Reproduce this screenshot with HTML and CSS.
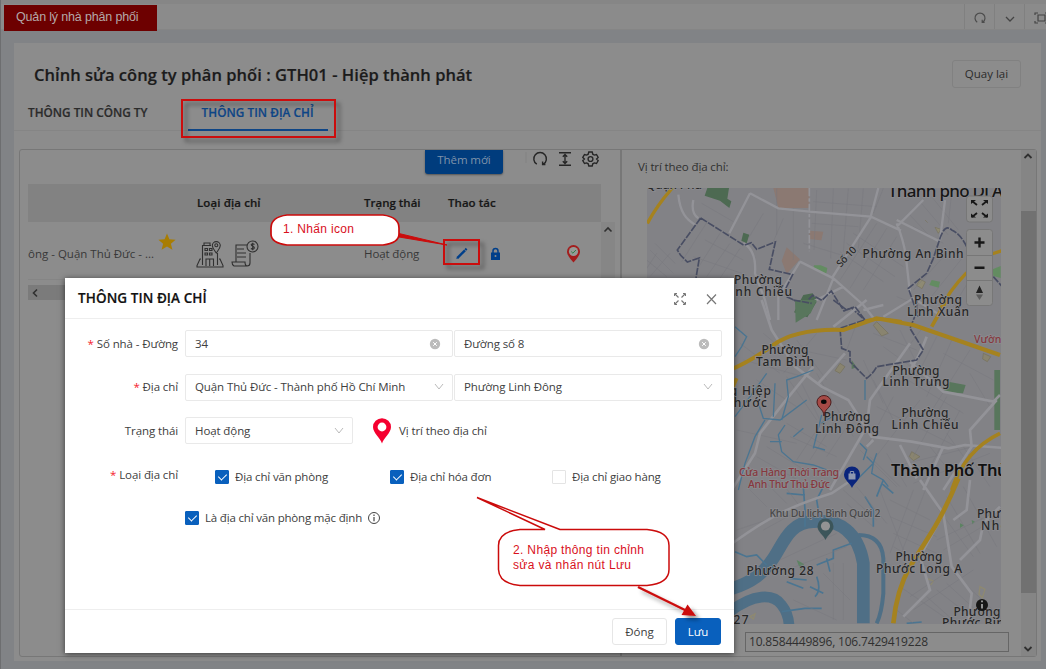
FILE: index.html
```html
<!DOCTYPE html>
<html lang="vi">
<head>
<meta charset="utf-8">
<title>Quản lý nhà phân phối</title>
<link rel="stylesheet" href="styles.css">
</head>
<body>
<div class="topbar">
  <div class="page-tab">Quản lý nhà phân phối</div>
  <div class="top-tools">
    <span class="tool"><svg width="14" height="14" viewBox="0 0 14 14"><path d="M4.2 11.2A5 5 0 1 1 9.8 11.2M9.2 8.8v2.6h2.4" fill="none" stroke="#4c4c4c" stroke-width="1.2"/></svg></span>
    <span class="tool"><svg width="12" height="12" viewBox="0 0 12 12"><path d="M2 5l4 4 4-4" fill="none" stroke="#444" stroke-width="1.3"/></svg></span>
    <span class="tool"><svg width="14" height="12" viewBox="0 0 14 12"><path d="M4 3h7v6H4zM1 3V1h3M1 9v2h3M11 1h3v2M11 11h3V9" fill="none" stroke="#444" stroke-width="1.2"/></svg></span>
  </div>
</div>
<main class="panel">
  <header class="panel-head">
    <h1 class="title">Chỉnh sửa công ty phân phối : GTH01 - Hiệp thành phát</h1>
    <button class="back">Quay lại</button>
  </header>
  <nav class="tabs">
    <span class="tab">THÔNG TIN CÔNG TY</span>
    <span class="tab active">THÔNG TIN ĐỊA CHỈ</span>
  </nav>
  <section class="split">
    <div class="list-pane">
      <div class="toolbar">
        <button class="add">Thêm mới</button>
        <svg class="tools" width="74" height="18" viewBox="0 0 74 18">
          <path d="M1 2v11" stroke="#828282"/>
          <g fill="none" stroke="#262626" stroke-width="1.4">
            <path d="M11.8 14.2A6.3 6.3 0 1 1 18.4 14.2M17.6 11.6v2.9h2.8"/>
            <path d="M34 2.7h12M34 15.3h12M40 5v8M37.8 6.8L40 4.6l2.2 2.2M37.8 11.2L40 13.4l2.2-2.2"/>
            <g transform="translate(65.500 9)"><path d="M-1.700-7h3.400l.6 2.200 1.500.9 2.200-.6 1.700 2.900L6.100 0l1.600 1.600L6 4.500l-2.200-.6-1.500.9L1.700 7h-3.400l-.6-2.200-1.500-.9-2.200.6-1.700-2.900L-6.100 0l-1.600-1.600L-6-4.500l2.200.6 1.500-.9z"/><circle r="2.400"/></g>
          </g>
        </svg>
      </div>
      <div class="thead"><span class="c-type">Loại địa chỉ</span><span class="c-status">Trạng thái</span><span class="c-act">Thao tác</span></div>
      <div class="trow">
        <span class="addr">ông - Quận Thủ Đức - ...</span>
        <svg class="star" width="18" height="18" viewBox="0 0 18 18"><path d="M9 .6l2.4 5.7 6.2.5-4.7 4 1.5 6L9 13.5l-5.400 3.300 1.500-6-4.700-4 6.200-.5z" fill="#a87d03"/></svg>
        <svg class="kinds" width="64" height="30" viewBox="0 0 64 30" fill="none" stroke="#303030" stroke-width="1.1">
          <path d="M6.500 26V6.500H15M21.500 14v12M5 20H4l-3 6.500v1.500h26v-1.500L24 20h-1M10 27v-7h7.500v7M13.700 20v7"/>
          <path d="M9 9.500h2.500v2H9zM13.500 9.500H16v2h-2.500zM9 14h2.500v2H9zM13.500 14H16v2h-2.500zM8 6V4h6v2.500"/>
          <path d="M20.300 14c-2-3-4-5-4-7.400a4 4 0 0 1 8 0c0 2.400-2 4.400-4 7.400z"/><circle cx="20.300" cy="6.300" r="1.500"/>
          <path d="M40 23V6h11M54 14v10q0 3-3 3H38q-2-1-2-4h13q0 4 2.500 4M43 10h5M43 14h7M43 18h7"/>
          <path d="M41.500 10h1M41.500 14h1M41.500 18h1" stroke-width="2"/>
          <circle cx="56.500" cy="7.500" r="5.500"/><path d="M58.500 5.500q-2-1.500-3.300 0 0 1.200 1.500 1.800 2 .8 1.500 2-1.300 1.400-3.300.2M56.700 3.800v7.400"/>
        </svg>
        <span class="status">Hoạt động</span>
        <svg class="acts" width="140" height="22" viewBox="0 0 140 22">
          <path d="M13.500 14.800L21 7.300" stroke="#003f8a" stroke-width="2.400"/><path d="M12.300 16l.7-2.500 1.800 1.800z" fill="#003f8a"/><path d="M21.300 7l1.300-1.300" stroke="#003f8a" stroke-width="2.400"/>
          <path d="M47 9.500h9v7.500h-9z" fill="#003f8a"/><path d="M49 10V8a2.500 2.500 0 0 1 5 0v2" fill="none" stroke="#003f8a" stroke-width="1.500"/><circle cx="51.500" cy="13" r="1" fill="#8c8c8c"/>
          <path d="M129.500 19.500c-1.500-2-6.500-6.500-6.500-11a6.500 6.500 0 0 1 13 0c0 4.500-5 9-6.500 11z" fill="#a31d1d"/><circle cx="129.500" cy="8.500" r="4.600" fill="#969a96"/><path d="M127.200 8.500l1.700 1.700 3-3.200" fill="none" stroke="#2f8148"/>
        </svg>
      </div>
      <div class="vscroll"><svg width="14" height="12" viewBox="0 0 14 12"><path d="M3.500 9.500L7 6l3.500 3.500" fill="none" stroke="#303030" stroke-width="1.600"/></svg></div>
      <div class="hscroll"><svg width="14" height="14" viewBox="0 0 14 14"><path d="M9 4.500L5.500 8 9 11.500" fill="none" stroke="#303030" stroke-width="1.600"/></svg></div>
    </div>
    <div class="map-pane">
      <div class="map-col">
        <div class="map-label">Vị trí theo địa chỉ:</div>
        <svg class="map" width="354" height="436" viewBox="647 188 354 436">
          <rect x="647" y="188" width="354" height="436" fill="#828286"/>
          <!-- northern districts -->
          <g transform="translate(630 140) scale(.33333)" fill="none">
            <path d="M430 144h108v60H445zM540 272l40 3-6 26-38-4zM470 322l40 36-40 44-15-40z" fill="#8b7972"/>
            <path d="M232 144h65l-5 32 12 8-6 20-28-22-46-15zM340 278l18 6-8 26-16-8zM520 465l28-5 14 22-30 50-40-15z" fill="#4d6a52"/>
            <path d="M552 376l20 0 20 8-4 22-20-12-18-8zM905 420l25 5-4 18-28-8zM1088 388l24-10v36l-22-6z" fill="#638c61"/>
            <path d="M870 418l16 8-10 20-16-10zM885 240l8 8M915 262l18 6-8 12z" fill="#8e8a73" stroke="#77735e" stroke-width="2"/>
            <g stroke="#77777e" stroke-width="1.500">
              <path d="M215 190l95 55M235 240l-80 125M270 280l-70 110M300 310l-70 100M330 325l-60 90M190 350l160 55M225 300l115 60M400 220l-45 75M460 235l-30 70M440 145v140M490 205v155M560 150l-8 180M610 145l-8 210M655 145l-15 190M700 145l-15 180M760 145l-30 75M550 185l190 15M545 250l140 10M520 310l130 40M670 280l150 100M650 310l145 100M630 335l130 90M740 250l-110 170M770 265l-110 180M800 290l-100 160M835 220l75 80M850 260l90 50M870 185l85 100M905 170l80 100M965 160l-10 90M60 330l70 70M50 360l60 50M75 310l60 60M120 340l-60 70M80 340l-40 60M850 450l100-110M880 500l120-150M800 470l130 50M970 500l90-150"/>
            </g>
            <g stroke="#939398" stroke-width="7">
              <path d="M145 164c5 55 25 75 50 90M190 180q-8 40 15 55M360 160l85 45 93 10 185 15 90 42M360 160l-62 120M745 144l-24 90-115 180M340 310q40 20 35 90l30 80 15 60M510 365l100 50 90 80 35 45M510 365l-65 105v70M800 250q25 60 30 120l10 90M880 180l-80 80M800 240l130 65M945 180l-15 120M610 415l-50 125M640 440l-120 60M760 530l90-55 80 50M700 510l60-15"/>
              <path d="M538 144v190" stroke-width="5" stroke-dasharray="25 6 10 6"/>
            </g>
            <path d="M212 234L142 330l10 16 20 20 36-12-10 60M212 234l130 82 22-8 16 20 56-22-18 82 70 16-20 40M470 470l50 24 28-28 28 15 28-28 38 60 22-10 38 35M1010 320q-20-40-45-50-20-20-35 25l-20 60-20 45-55 45 30 85M1090 410l25 28" stroke="#494e63" stroke-width="5" stroke-dasharray="22 4"/>
            <path d="M52 250q30-55 75-106M930 510q25-55 80-112M1085 342l30-10M700 545q40-15 115 0" stroke="#a5821f" stroke-width="10"/>
          </g>
          <!-- central districts -->
          <g transform="translate(730 300) scale(.33333)" fill="none">
            <path d="M195 0h65l-18 40-45 28zM655 245l52 10-8 25-60-5zM365 180l15 22-15 5zM793 210h17v180h-17z" fill="#58765c"/>
            <path d="M440 65l35 35-20 8-25-32zM545 455l25 15-20 12-12-12zM760 160l22 10-10 15-14-8zM330 190l15 10-15 20-15-8z" fill="#89846f" stroke="#746f5b" stroke-width="2"/>
            <g stroke="#77777e" stroke-width="1.500">
              <path d="M30 130l120 90M40 180l180 50M80 240l120 80M20 390l180 40M100 100l120 100M200 120l90 120M260 100l-100 120M170 230l90 130M210 240l80 160M260 220l110 190M300 330l-100 150M330 340l-90 140M370 350l-80 120M400 180l60 130M430 240l70 140M460 140l110 80M510 90l60 120M580 80l-60 80M620 110l-60 120M670 110l-80 180M720 150l-120 190M500 220l200 120M440 320l240 120M490 290l-80 150M570 300l-140 180M650 290l-100 180M690 330l-100 190M720 220l60 100M640 160l150 80M390 450l110 110M420 470l90 90M470 460l60 100M600 440l80 100M650 400l80 110M700 440l80 120M490 500l240-60M550 550l230-90M180 410l140 60M170 370l120 70M110 440l130 80M80 470l140 80M210 150l140 30M380 70l-30 80M430 100l130 50"/>
            </g>
            <g stroke="#939398" stroke-width="8">
              <path d="M95 0l30 90 70 110 80 60 80 40 70 110 120 15 110 20 50-10 130 10M250 200l-90 110-70 90-15 60-70 110M345 160l-80 90M540 130l-120 170-10 80-110 190M540 185l100 90 150 30 20-20M800 300l-80 90 5 50-85 130M410 0l-100 80M590 110q-30 80-60 110M640 440l-60 130M510 435l50 100M430 420l-20 20"/>
            </g>
            <g stroke="#4b7591" stroke-width="4"><path d="M15 80l35 30-15 30-20 30M250 210l-50 20-30 10 5 50-20 70M110 220l-50 70-45 60M135 250l-5 100M230 300l-80 60-50-5-20-60M105 360l-30 50-30 80-20 80M165 375l-20 30 10 50 35 30 60 10 40 15M220 385l-30 25M120 425h35M275 345l-25 100M275 370l30-20M250 440l35 10M405 240v60M390 430l20 20-10 30M410 470l20 20-5 30 35 20 15 20M440 460l-10 30-50 50"/></g>
            <path d="M310 0l40 30 25-10 30 40-75 25 5 60 25 10v30l50 50q20-15 30-35l60-10 60-10 20-30-40-65 20-50V0M190 0l55 10" stroke="#494e63" stroke-width="5" stroke-dasharray="22 4"/>
            <path d="M0 210q60-25 130-75t210-45l100-35 110 20 260 90" stroke="#a5821f" stroke-width="12"/><path d="M605 80l45-80M665 570q40-120 145-170M0 280l20-45" stroke="#a5821f" stroke-width="11"/>
          </g>
          <!-- river and southern districts -->
          <g transform="translate(730 480) scale(.33333)" fill="none">
            <path d="M0 328C70 305 100 280 130 235S180 125 250 125C330 115 385 160 400 250V430" stroke="#4f6f86" stroke-width="38"/>
            <path d="M0 395C70 340 130 340 155 375q20 25 22 60" stroke="#4f6f86" stroke-width="32"/>
            <path d="M385 165q70 0 75 70V340q-5 60-20 90" stroke="#4f6f86" stroke-width="12"/>
            <g stroke="#4b7591" stroke-width="5"><path d="M15 215l35 15 30-5 30 30M225 140V90l-5-70M170 40l55 5M270 120l-10-60 20-40M365 190l-55 20v25l-50 20M290 235l10 40M240 320l40 20M230 300l-50-5M170 305l50 20M260 290q15 40-5 60M155 395l70-10h50M430 140V90l-25-40M460 0l-20 50M490 40l-35-30M530 430l45-4"/></g>
            <path d="M200 240l22 12-10 20zM20 345l20-10M690 130l12 6-12 8zM725 120l10 5-8 8z" fill="#5c8362"/>
            <path d="M750 320l15 8-8 25-10-10zM590 295l20 8-8 12M60 410l15-8-5 15z" stroke="#8e8971" stroke-width="4"/>
            <g stroke="#77777e" stroke-width="1.500"><path d="M150 240l170-80M170 270l180-70M100 150l110-60M20 150l120-40M50 20l60 60M110 10l60 60M150 0l60 80M340 30l100 90M350 70l80 70M380 20l90 110M450 30l70 180M480 60l120 60M480 110l140 60M490 160l130 60M490 200l120 70M550 30l-70 190M590 20l-80 210M620 80l110 150M650 50l100 170M700 20l100 180M620 180l170-80M640 210l150-90M670 280l130 120M650 310l120 110M620 330l130 100M590 350l90 80M550 390l180-120M540 350l150-100M510 320l160 110M500 390l50 40M310 250v170M340 250v170M280 280l80 80M190 360l130 60"/></g>
            <path d="M0 195Q90 130 150 100t155-60l60-40M570 0l70 100 25 160 60 80-10 90M810 80l-50 50-10 50-60 60M720 0l-10 90-40 30M640 100l-70 130 30 100-80 80" stroke="#939398" stroke-width="8"/>
            <path d="M685-5Q650 80 615 140L540 260Q500 330 490 430" stroke="#a5821f" stroke-width="14"/>
          </g>
          <g class="map-text" text-anchor="middle">
            <text x="674" y="189" textLength="56">Quận Phú</text>
            <text class="city" x="888" y="197" text-anchor="start" textLength="125">Thành phố Dĩ An</text>
            <text x="913" y="257.500" textLength="101">Phường An Bình</text>
            <text class="road" transform="translate(849 259) rotate(-47)" textLength="24">Số 10</text>
            <text x="758" y="284" textLength="48">Phường</text><text x="758" y="296" textLength="68">Linh Chiểu</text>
            <text x="938" y="304" textLength="48">Phường</text><text x="938" y="316" textLength="62">Linh Xuân</text>
            <text x="785" y="354" textLength="47">Phường</text><text x="785" y="366" textLength="58">Tam Bình</text>
            <text x="916" y="374.500" textLength="47">Phường</text><text x="916" y="386" textLength="67">Linh Trung</text>
            <text x="742" y="395" textLength="58">ờng Hiệp</text><text x="746" y="407" textLength="42">Phước</text>
            <text x="847" y="421" textLength="47">Phường</text><text x="847" y="433" textLength="64">Linh Đông</text>
            <text x="925" y="417" textLength="47">Phường</text><text x="925" y="429" textLength="67">Linh Chiểu</text>
            <text class="big" x="891" y="476" text-anchor="start" textLength="152">Thành Phố Thủ Đức</text>
            <text class="red" x="974" y="343" text-anchor="start" textLength="48">Vườn thú</text>
            <text class="red" x="789" y="475.500" textLength="100">Cửa Hàng Thời Trang</text><text class="red" x="789" y="487.500" textLength="82">Anh Thư Thủ Đức</text>
            <text class="poi" x="825" y="517" textLength="111">Khu Du lịch Bình Quới 2</text>
            <text x="977" y="518" text-anchor="start" textLength="47">Phường</text><text x="981" y="530" text-anchor="start" textLength="36">Nhơn</text>
            <text x="919" y="561" textLength="47">Phường</text><text x="919" y="573" textLength="86">Phước Long A</text>
            <text x="780" y="575" textLength="67">Phường 28</text><text x="741" y="623.500" textLength="15">27</text>
            <text x="977" y="616" textLength="47">Phường</text><text x="942" y="627" text-anchor="start" textLength="70">Phước Bình</text>
          </g>
          <path d="M824 416c0-7-7-8-7-14a7 6.500 0 0 1 14 0c0 6-7 7-7 14z" fill="#a64a46" stroke="#4a1c1c"/><ellipse cx="823.800" cy="401.800" rx="2.800" ry="2.200" fill="#080808"/>
          <path d="M852 488c-2-5-8-8-8-13.500a8 8 0 0 1 16 0c0 5.500-6 8.500-8 13.500z" fill="#09247c"/><path d="M848.500 473.500h7v6h-7z" fill="#8d97b0"/><path d="M850.300 474v-2.500h3.400v2.500" fill="none" stroke="#8d97b0"/>
          <path d="M825.500 540c-2-5-8-8-8-13.500a8 8 0 0 1 16 0c0 5.500-6 8.500-8 13.500z" fill="#3c555a"/><circle cx="825.500" cy="526" r="4.600" fill="#939393"/>
          <g fill="#8c8c8c" stroke="#777" stroke-width="1"><rect x="966.500" y="196" width="26" height="26" rx="3"/><rect x="966.500" y="229.500" width="26" height="76" rx="3"/><path d="M967 255.500h25M967 280.500h25"/></g>
          <g stroke="#171717" stroke-width="1.800" fill="#171717"><path d="M972 201l5 4M987 201l-5 4M972 217l5-4M987 217l-5-4"/><path d="M971 200h5l-5 4zM988 200h-5l5 4zM971 217.500h5l-5-4zM988 217.500h-5l5-4z" stroke="none"/><path d="M974.500 242.500h10M979.500 237.500v10M974.500 267.800h10" stroke-width="2.400"/></g>
          <path d="M979.500 285.500l3.500 7.500h-7z" fill="#222"/><path d="M979.500 300l3.500-5.500h-7z" fill="#5d5d5d"/>
          <circle cx="982" cy="605" r="6" fill="#161616"/><path d="M982 604v4.500M982 600.500v1.800" stroke="#939393" stroke-width="2"/>
        </svg>
        <div class="coords">10.8584449896, 106.7429419228</div>
      </div>
      <div class="map-scroll">
        <svg width="14" height="14" viewBox="0 0 14 14"><path d="M3.500 8L7 4.500 10.500 8" fill="none" stroke="#303030" stroke-width="1.800"/></svg>
        <div class="thumb"></div>
        <svg width="14" height="14" viewBox="0 0 14 14"><path d="M3.500 4L7 7.500 10.500 4" fill="none" stroke="#303030" stroke-width="1.800"/></svg>
      </div>
    </div>
  </section>
</main>

<div class="modal">
  <div class="modal-head"><span class="modal-title">THÔNG TIN ĐỊA CHỈ</span>
    <svg width="46" height="14" viewBox="0 0 46 14"><g fill="none" stroke="#777"><path d="M2 2l3.500 3.500M12 2L8.500 5.500M2 12l3.500-3.500M12 12L8.500 8.500" stroke-width="1.200"/><path d="M1.500 4V1.500H4M10 1.500h2.500V4M1.500 10v2.500H4M10 12.500h2.500V10"/><path d="M34 2.500l9 9.500M43 2.500L34 12" stroke-width="1.200"/></g></svg>
  </div>
  <div class="form">
    <div class="row"><label class="req">Số nhà - Đường</label>
      <div class="field">34<svg width="12" height="12"><circle cx="6" cy="6" r="5.200" fill="#bbb"/><path d="M4.200 4.200l3.600 3.600M7.800 4.200L4.200 7.800" stroke="#fff"/></svg></div>
      <div class="field">Đường số 8<svg width="12" height="12"><circle cx="6" cy="6" r="5.200" fill="#bbb"/><path d="M4.200 4.200l3.600 3.600M7.800 4.200L4.200 7.800" stroke="#fff"/></svg></div></div>
    <div class="row"><label class="req">Địa chỉ</label>
      <div class="field sel">Quận Thủ Đức - Thành phố Hồ Chí Minh<svg width="10" height="10"><path d="M1 2l4 5 4-5" fill="none" stroke="#bbb"/></svg></div>
      <div class="field sel">Phường Linh Đông<svg width="10" height="10"><path d="M1 2l4 5 4-5" fill="none" stroke="#bbb"/></svg></div></div>
    <div class="row"><label>Trạng thái</label>
      <div class="field sel short">Hoạt động<svg width="10" height="10"><path d="M1 2l4 5 4-5" fill="none" stroke="#bbb"/></svg></div>
      <svg class="pin" width="20" height="26" viewBox="0 0 20 26"><path d="M10 25.500C8.500 20 1 15 1 9a9 8.700 0 0 1 18 0c0 6-7.500 11-9 16.500z" fill="#f5002f"/><circle cx="10" cy="9" r="4.400" fill="#fff"/></svg><span>Vị trí theo địa chỉ</span></div>
    <div class="row checks"><label class="req">Loại địa chỉ</label>
      <span class="check c1"><i class="box on"></i>Địa chỉ văn phòng</span><span class="check c2"><i class="box on"></i>Địa chỉ hóa đơn</span><span class="check"><i class="box"></i>Địa chỉ giao hàng</span></div>
    <div class="row last"><span class="check"><i class="box on"></i>Là địa chỉ văn phòng mặc định</span>
      <svg class="info" width="14" height="14"><circle cx="7" cy="7" r="5.500" fill="none" stroke="#444"/><path d="M7 6v4.200M7 3.600v1.300" stroke="#444" stroke-width="1.200"/></svg></div>
  </div>
  <div class="modal-foot"><button class="btn">Đóng</button><button class="btn primary">Lưu</button></div>
</div>

<svg class="notes" width="1046" height="669" viewBox="0 0 1046 669">
  <defs><filter id="shade" x="-20%" y="-20%" width="150%" height="160%"><feDropShadow dx="4" dy="4" stdDeviation="2" flood-color="#000" flood-opacity=".4"/></filter></defs>
  <g fill="none" stroke="#cb0b0b" stroke-width="2">
    <rect x="182" y="100" width="153" height="37" filter="url(#shade)"/>
    <rect x="444" y="240" width="35" height="24" filter="url(#shade)"/>
    <path d="M399 233.500L447 245 399 237z" fill="#cb0b0b" stroke-width="1"/>
    <path d="M287 215h96q16 2 16 13v6q0 9-16 11h-96q-16-2-16-11v-6q0-11 16-13z" fill="#fff" stroke-width="1.700"/>
    <path d="M520 529.500h25L477 497.500l83 32h87q22 2 22 16v24q0 14-22 16H520q-21-2-21.500-16v-24q0-14 21.500-16z" fill="#fff" stroke-width="1.500" stroke-linejoin="bevel"/>
    <g filter="url(#shade)"><path d="M638 587l49 24" stroke-width="2.500"/><path d="M696 616l-14.500 -1 6-10.500z" fill="#cb0b0b" stroke="none"/></g>
  </g>
  <g class="note-text"><text x="283" y="233" textLength="71">1. Nhấn icon</text><text x="513" y="554" textLength="131">2. Nhập thông tin chỉnh</text><text x="513" y="569" textLength="118">sửa và nhấn nút Lưu</text></g>
</svg>
</body>
</html>
```
FILE: styles.css
```css
* { box-sizing: border-box; }
body { margin: 0; width: 1046px; height: 669px; overflow: hidden; position: relative; background: #818386; font: 11.5px/16px "Open Sans", "Noto Sans", sans-serif; color: #2b2b2b; border-left: 1px solid #6d6e70; }
button { font: inherit; color: inherit; padding: 0; }
.topbar { height: 30px; background: #8b8b8b; border-top: 4px solid #868686; border-bottom: 1px solid #858585; padding-left: 3px; display: flex; justify-content: space-between; }
.page-tab { width: 153px; height: 26px; margin-top: 1px; background: #6d0000; color: #b4a9a9; font: 12.5px/25px "Liberation Sans", sans-serif; padding-left: 12px; letter-spacing: -.16px; flex: none; white-space: nowrap; }
.top-tools { display: flex; height: 25px; width: 82px; overflow: hidden; }
.tool { flex: 0 0 30px; height: 25px; border-left: 1px solid #808080; display: flex; align-items: center; justify-content: center; padding-top: 3px; }
.tool:last-child { justify-content: flex-start; padding-left: 9px; }
.panel { margin: 13px 0 0 13px; width: 1027px; height: 618px; background: #8c8c8c; padding: 17px 4px 5px 5px; }
.panel-head { display: flex; justify-content: space-between; height: 28px; padding: 0 16px 0 15px; }
.title { margin: 3px 0 0; font-size: 16.5px; line-height: 24px; font-weight: 600; color: #1b1b1b; white-space: nowrap; letter-spacing: .04px; -webkit-text-stroke: .2px; }
.back { width: 69px; height: 28px; background: none; border: 1px solid #818181; border-radius: 3px; }
.tabs { display: flex; height: 43px; margin: 0 -4px 0 -5px; border-bottom: 1px solid #858585; padding: 12px 0 0 14px; font-size: 11.8px; font-weight: 600; -webkit-text-stroke: .2px; }
.tab { height: 31px; line-height: 24px; }
.tab + .tab { margin-left: 40px; width: 140px; padding-left: 14px; color: #0e4586; border-bottom: 2px solid #0e4586; white-space: nowrap; letter-spacing: .05px; }
.split { display: flex; margin-top: 18px; height: 508px; border: 1px solid #777; border-radius: 3px; width: 1018px; }
.list-pane { width: 602px; border-right: 2px solid #777; padding-left: 8px; flex: none; display: grid; grid-template: 34px 38px 58px 28px / 573px 27px; overflow: hidden; }
.toolbar { grid-column: 1 / -1; display: flex; padding-left: 397px; }
.add { width: 78px; height: 24px; border: 0; border-radius: 0 0 3px 3px; background: #003c7d; color: #7f93aa; box-shadow: 0 1px 2px #555; padding-bottom: 4px; letter-spacing: -.1px; }
.tools { margin: 0 0 0 22px; flex: none; }
.thead { background: #828282; font-weight: 600; color: #171717; display: flex; line-height: 38px; -webkit-text-stroke: .2px; white-space: nowrap; }
.c-type { width: 168px; margin-left: 169px; letter-spacing: .1px; } .c-status { width: 84px; margin-left: -1px; } .c-act { letter-spacing: .05px; }
.trow { grid-row: 3; display: flex; padding-top: 11px; height: 58px; border-bottom: 1px solid #858585; }
.addr { width: 130px; padding-top: 13px; flex: none; white-space: nowrap; color: #383838; }
.star { margin-top: 0; flex: none; }
.kinds { margin: 6px 0 0 20px; flex: none; }
.status { width: 80px; margin: 13px 0 0 104px; flex: none; color: #383838; white-space: nowrap; letter-spacing: -.1px; }
.acts { margin-top: 10px; flex: none; }
.vscroll { grid-column: 2; grid-row: 3; width: 14px; background: #868686; }
.hscroll { grid-row: 4; height: 15px; margin-top: 5px; background: #7b7b7b; }
.map-pane { flex: 1; display: flex; justify-content: space-between; }
.map-col { padding-left: 16px; width: 390px; }
.map-label { height: 38px; padding-top: 9px; color: #303030; letter-spacing: -.12px; }
.map { display: block; margin-left: 9px; }
.coords { margin: 8px 0 0 107px; width: 264px; height: 20px; border: 1px solid #666; padding-left: 3px; line-height: 17px; color: #303030; font-size: 12px; letter-spacing: -.18px; white-space: nowrap; }
.map-scroll { width: 15px; height: 506px; background: #858585; }
.map-scroll svg { display: block; }
.thumb { height: 382px; margin: 47px 0 50px; background: #717171; }
.map-text { font: 500 12px "Noto Sans", sans-serif; fill: #272727; stroke: #8b8b8f; stroke-width: 1.5px; paint-order: stroke; }
.map-text .city { font-size: 17px; fill: #161616; }
.map-text .big { font-size: 16.5px; font-weight: 600; fill: #111; }
.map-text .road { font-size: 10px; }
.map-text .red { font-size: 10.5px; fill: #86383e; }
.map-text .poi { font-size: 10.5px; fill: #484848; }
.modal { position: absolute; left: 64px; top: 278px; width: 669px; height: 375px; background: #fff; box-shadow: 0 1px 6px rgba(0,0,0,.6); color: #404040; display: flex; flex-direction: column; letter-spacing: -.1px; }
.modal-head { height: 41px; flex: none; border-bottom: 1px solid #eee; display: flex; align-items: center; justify-content: space-between; padding: 0 15px 0 13px; }
.modal-title { font-size: 13.5px; letter-spacing: .08px; font-weight: 600; color: #111; -webkit-text-stroke: .2px; margin-top: -1px; }
.modal-head svg { margin-top: 2px; }
.form { flex: 1; padding-top: 11px; }
.row { display: flex; align-items: center; height: 27px; margin-bottom: 16.5px; white-space: nowrap; }
.row label { width: 113px; margin-right: 7px; text-align: right; flex: none; }
.req::before { content: "*"; color: #f5222d; margin-right: 3px; }
.field { width: 268px; height: 27px; border: 1px solid #e9e9e9; border-radius: 2px; padding: 0 11px 0 9px; display: flex; justify-content: space-between; align-items: center; margin-right: 1px; flex: none; }
.field.sel { padding-right: 8px; }
.field.short { width: 168px; margin-right: 19px; }
.pin { margin-right: 7px; }
.row.checks { margin-top: 19px; margin-bottom: 14px; }
.checks label { margin-top: -4px; }
.check { display: inline-flex; align-items: center; letter-spacing: -.15px; }
.c1 { width: 175px; margin-left: 30px; } .c2 { width: 162px; } .checks .c1, .checks .c2 { flex: none; }
.box { width: 14px; height: 14px; border: 1px solid #e4e4e4; border-radius: 1px; margin-right: 6px; flex: none; display: flex; justify-content: center; }
.box.on { background: #0960bd; border-color: #0960bd; }
.box.on::after { content: ""; width: 4px; height: 7px; margin-top: 1px; border: solid #fff; border-width: 0 1.5px 1.5px 0; transform: rotate(45deg); }
.row.last { padding-left: 120px; }
.row.last .check { letter-spacing: -.18px; }
.info { margin-left: 5px; }
.modal-foot { height: 44px; border-top: 1px solid #eee; display: flex; justify-content: flex-end; gap: 8px; padding: 8px 13px 0 0; flex: none; }
.btn { width: 55px; height: 27px; border: 1px solid #e6e6e6; border-radius: 3px; background: #fff; }
.primary { width: 46px; background: #0960bd; color: #fff; border-color: #0960bd; }
.notes { position: absolute; left: -1px; top: 0; }
.note-text { font: 12px "Liberation Sans", sans-serif; fill: #d9101c; }
```
